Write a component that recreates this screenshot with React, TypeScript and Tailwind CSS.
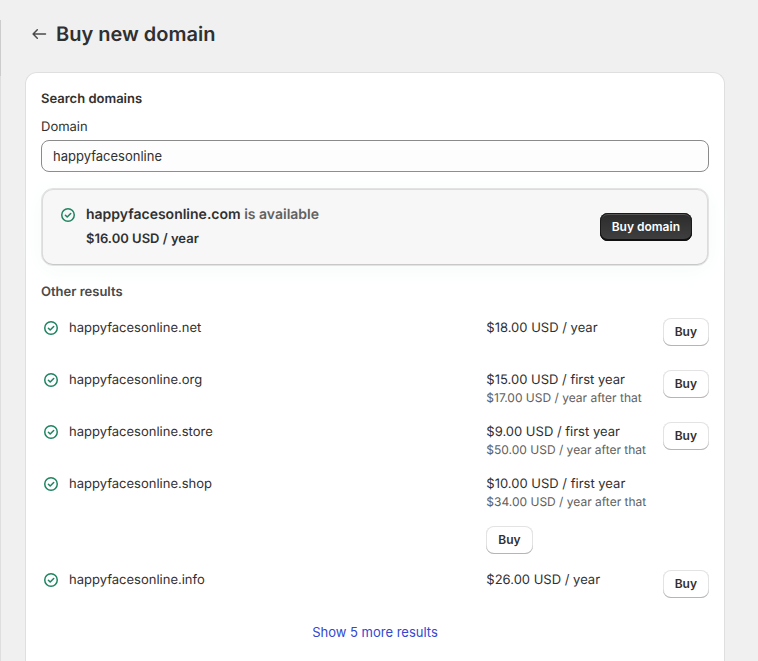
import React from 'react'

type Result = {
  name: string
  price: string
  renewal?: string
  stacked?: boolean
}

const RESULTS: Result[] = [
  { name: 'happyfacesonline.net', price: '$18.00 USD / year' },
  { name: 'happyfacesonline.org', price: '$15.00 USD / first year', renewal: '$17.00 USD / year after that' },
  { name: 'happyfacesonline.store', price: '$9.00 USD / first year', renewal: '$50.00 USD / year after that' },
  { name: 'happyfacesonline.shop', price: '$10.00 USD / first year', renewal: '$34.00 USD / year after that', stacked: true },
  { name: 'happyfacesonline.info', price: '$26.00 USD / year' },
]

function CheckIcon() {
  return (
    <svg viewBox="0 0 20 20" className="size-5 shrink-0 text-[#1f8460]" fill="none" stroke="currentColor" strokeWidth="1.5" strokeLinecap="round" strokeLinejoin="round" aria-hidden="true">
      <circle cx="10" cy="10" r="6.25" />
      <path d="M7.4 10.2 9.2 12 12.7 8.5" />
    </svg>
  )
}

function BackIcon() {
  return (
    <svg viewBox="0 0 20 20" className="size-5" fill="none" stroke="currentColor" strokeWidth="1.5" strokeLinecap="round" strokeLinejoin="round" aria-hidden="true">
      <path d="M16.5 10H4.5M8.3 5.8 4.1 10l4.2 4.2" />
    </svg>
  )
}

function BuyButton() {
  return (
    <button
      type="button"
      className="h-7 rounded-lg bg-white px-3 text-xs leading-4 font-semibold text-[#303030] shadow-[inset_0_-1px_0_#b5b5b5,inset_0_0_0_1px_#e3e3e3]"
    >
      Buy
    </button>
  )
}

function ResultRow({ result }: { result: Result }) {
  return (
    <li className="grid min-h-9 grid-cols-[2fr_1fr]">
      <div className="flex gap-2">
        <CheckIcon />
        <span>{result.name}</span>
      </div>
      <div className={result.stacked ? 'flex flex-col items-start gap-4' : 'flex items-start justify-between'}>
        <div>
          <p>{result.price}</p>
          {result.renewal && <p className="text-xs leading-4 text-[#616161]">{result.renewal}</p>}
        </div>
        <BuyButton />
      </div>
    </li>
  )
}

export default function App() {
  const [domain, setDomain] = React.useState('happyfacesonline')

  return (
    <div className="flex min-h-screen bg-[#f0f0f0] font-['Inter',sans-serif] text-[13px] leading-5 font-normal text-[#303030] antialiased [text-rendering:geometricPrecision]">
      {/* Edge of the navigation */}
      <div className="flex w-px flex-col pt-5">
        <div className="h-14 bg-[#cccccc]" />
        <div className="flex-1 bg-[#dedede]" />
      </div>

      <main className="flex min-w-0 flex-1 flex-col pt-5 pr-[33px] pl-6">
        <header className="mb-6 flex h-7 items-center gap-1 pl-1">
          <a href="#" aria-label="Back" className="flex size-5 text-[#4a4a4a]">
            <BackIcon />
          </a>
          <h1 className="pl-[3px] text-xl leading-7 font-semibold">Buy new domain</h1>
        </header>

        <section className="flex-1 rounded-t-xl border border-b-0 border-[#dfdfdf] bg-white px-[15px] pt-4 pb-4">
          <h2 className="mb-2 font-semibold">Search domains</h2>
          <label htmlFor="domain" className="mb-[3px] block">Domain</label>
          <input
            id="domain"
            type="text"
            value={domain}
            onChange={(e) => setDomain(e.target.value)}
            className="block h-8 w-full rounded-lg border border-[#8a8a8a] bg-[#fdfdfd] px-[11px]"
          />

          <div className="mt-4 flex items-center justify-between rounded-xl border border-[#e3e3e3] bg-[#f7f7f7] p-4 shadow-[inset_0_-1px_0_#c8c8c8,inset_0_0_0_1px_#dcdcdc,0_4px_24px_#f5fbf9]">
            <div className="flex gap-2">
              <CheckIcon />
              <div>
                <p className="mb-1 text-sm leading-5 font-semibold text-[#616161]">
                  <span className="text-[#303030]">{domain}.com</span> is available
                </p>
                <p className="font-semibold">$16.00 USD / year</p>
              </div>
            </div>
            <button
              type="button"
              className="h-7 rounded-lg bg-linear-to-b from-[#2b2b2b] to-[#404040] px-3 text-xs leading-4 font-semibold text-white shadow-[inset_0_-2px_0_#111111,inset_0_0_0_1px_#1a1a1a,inset_0_2px_0_#555555]"
            >
              Buy domain
            </button>
          </div>

          <h3 className="mt-4 mb-4 font-semibold text-[#4a4a4a]">Other results</h3>
          <ul className="flex flex-col gap-4">
            {RESULTS.map((result) => (
              <ResultRow key={result.name} result={result} />
            ))}
          </ul>

          <div className="mt-4 text-center">
            <button type="button" className="text-[#3347cf]">Show 5 more results</button>
          </div>
        </section>
      </main>
    </div>
  )
}
